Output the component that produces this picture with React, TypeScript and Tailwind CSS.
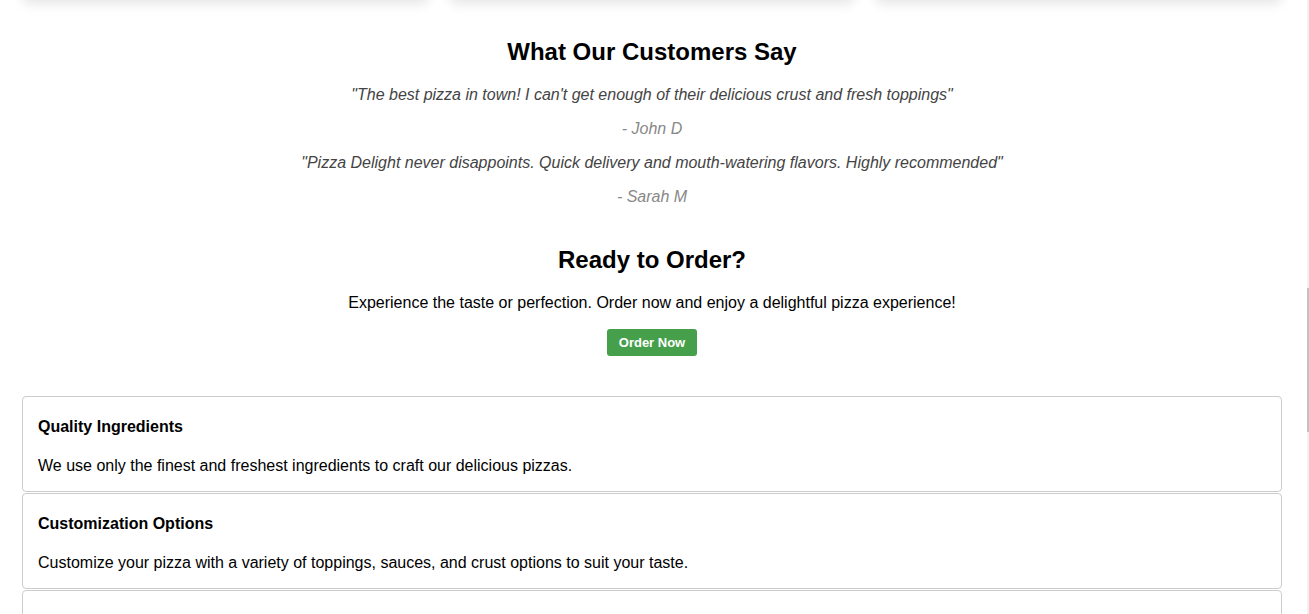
const testimonials = [
  {
    quote: "\"The best pizza in town! I can't get enough of their delicious crust and fresh toppings\"",
    author: "- John D",
  },
  {
    quote: "\"Pizza Delight never disappoints. Quick delivery and mouth-watering flavors. Highly recommended\"",
    author: "- Sarah M",
  },
];

const features = [
  {
    title: "Quality Ingredients",
    text: "We use only the finest and freshest ingredients to craft our delicious pizzas.",
  },
  {
    title: "Customization Options",
    text: "Customize your pizza with a variety of toppings, sauces, and crust options to suit your taste.",
  },
  {
    title: "Fast Delivery",
    text: "Get your pizza delivered hot and fresh to your doorstep in no time.",
  },
];

export default function App() {
  return (
    <div
      className="relative h-[614px] w-[1309px] overflow-hidden bg-white text-black"
      style={{ fontFamily: '"Liberation Sans", Arial, sans-serif' }}
    >
      <div className="w-[1307px] pl-[22px] pr-[25px]">
        {/* menu cards, scrolled out of view */}
        <div className="-mt-[300px] grid h-[300px] grid-cols-3 gap-5">
          <div className="rounded-lg bg-white shadow-[0_4px_12px_rgba(0,0,0,0.1)]" />
          <div className="rounded-lg bg-white shadow-[0_4px_12px_rgba(0,0,0,0.1)]" />
          <div className="rounded-lg bg-white shadow-[0_4px_12px_rgba(0,0,0,0.1)]" />
        </div>

        <section className="mt-[38px] text-center">
          <h2 className="text-[24px] font-bold leading-[28px]">What Our Customers Say</h2>
          <div className="mt-[20px] flex flex-col gap-4">
            {testimonials.map((t) => (
              <div key={t.author} className="flex flex-col gap-4">
                <p className="text-[16px] italic leading-[18px] text-[#444]">{t.quote}</p>
                <p className="text-[16px] italic leading-[18px] text-[#888]">{t.author}</p>
              </div>
            ))}
          </div>
        </section>

        <section className="mt-[40px] flex flex-col items-center text-center">
          <h2 className="text-[24px] font-bold leading-[28px]">Ready to Order?</h2>
          <p className="mt-[20px] text-[16px] leading-[18px]">
            Experience the taste or perfection. Order now and enjoy a delightful pizza experience!
          </p>
          <button className="mt-[17px] h-[27px] w-[90px] rounded-[3px] bg-[#46a04b] text-[13px] font-bold text-white">
            Order Now
          </button>
        </section>

        <div className="mt-[40px] flex flex-col gap-px">
          {features.map((f) => (
            <div
              key={f.title}
              className="h-[96px] rounded-[4px] border border-[#ccc] px-[15px] pt-[21px]"
            >
              <h3 className="text-[16px] font-bold leading-[18px]">{f.title}</h3>
              <p className="mt-[21px] text-[16px] leading-[18px]">{f.text}</p>
            </div>
          ))}
        </div>
      </div>

      {/* scrollbar */}
      <div className="absolute right-0 top-0 h-full w-[2px] bg-[#f1f1f1]">
        <div className="mt-[288px] h-[144px] w-full bg-[#c1c1c1]" />
      </div>
    </div>
  );
}
